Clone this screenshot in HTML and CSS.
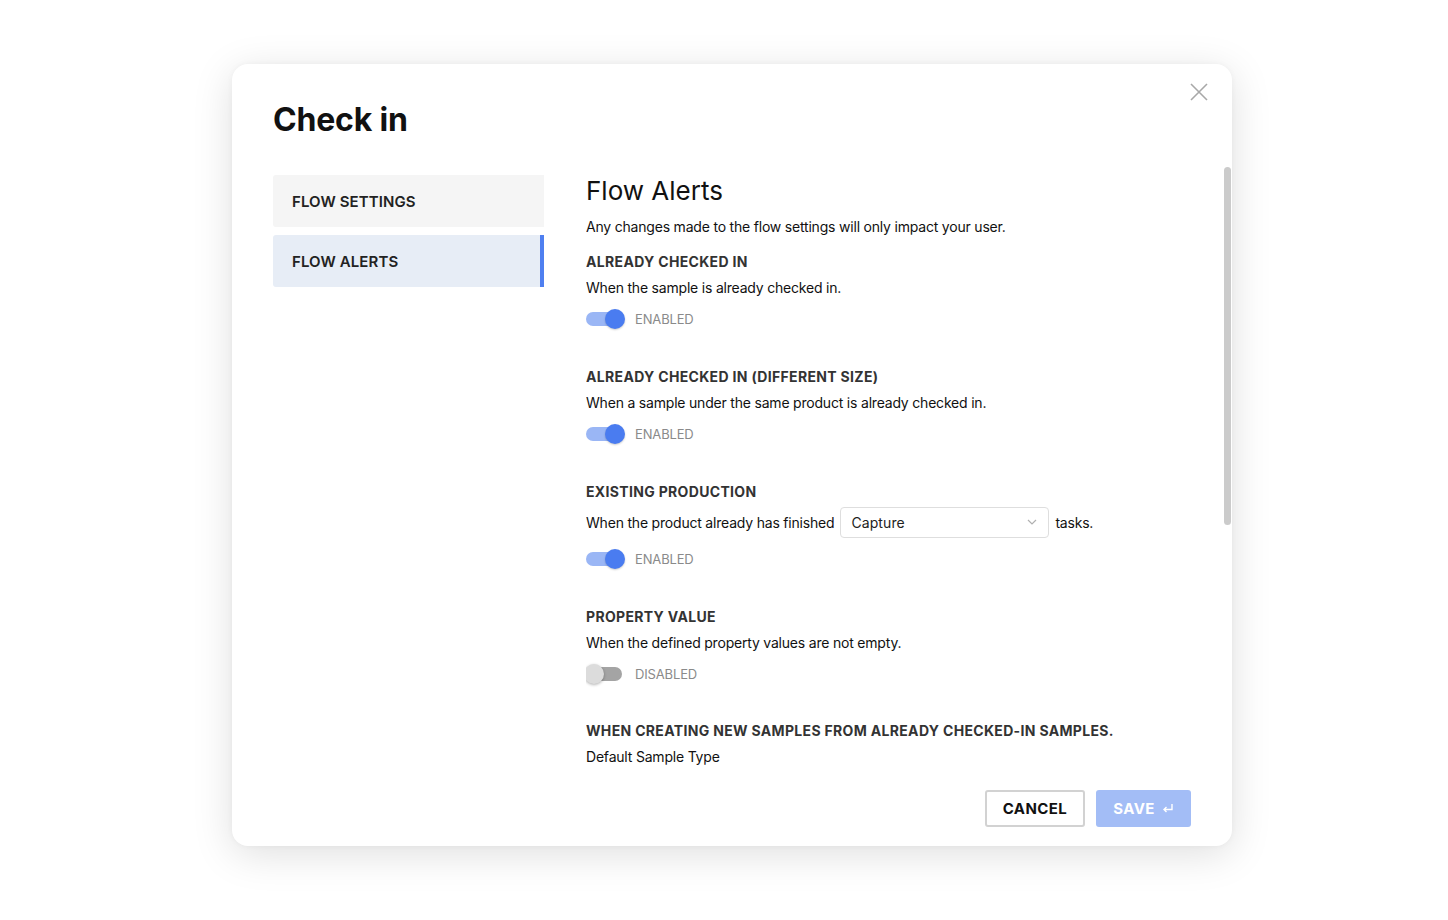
FILE: index.html
```html
<!DOCTYPE html>
<html lang="en">
<head>
<meta charset="utf-8">
<title>Check in</title>
<link rel="stylesheet" href="styles.css">
</head>
<body>
<div class="modal">
  <button class="close" aria-label="Close">
    <svg width="18" height="18" viewBox="0 0 18 18"><path d="M1 1L17 17M17 1L1 17" stroke="#a8a8a8" stroke-width="1.6" fill="none"/></svg>
  </button>
  <header class="modal-header">
    <h1 class="modal-title">Check in</h1>
  </header>
  <div class="modal-body">
    <nav class="sidebar">
      <div class="nav-item">FLOW SETTINGS</div>
      <div class="nav-item active">FLOW ALERTS</div>
    </nav>
    <div class="content">
      <h2 class="content-title">Flow Alerts</h2>
      <p class="content-desc">Any changes made to the flow settings will only impact your user.</p>

      <section class="alert">
        <h3 class="alert-title">ALREADY CHECKED IN</h3>
        <p class="alert-desc">When the sample is already checked in.</p>
        <div class="toggle-row"><span class="toggle on"><span class="knob"></span></span><span class="toggle-label">ENABLED</span></div>
      </section>

      <section class="alert">
        <h3 class="alert-title">ALREADY CHECKED IN (DIFFERENT SIZE)</h3>
        <p class="alert-desc">When a sample under the same product is already checked in.</p>
        <div class="toggle-row"><span class="toggle on"><span class="knob"></span></span><span class="toggle-label">ENABLED</span></div>
      </section>

      <section class="alert">
        <h3 class="alert-title">EXISTING PRODUCTION</h3>
        <div class="select-row">
          <span>When the product already has finished</span>
          <div class="select"><span>Capture</span>
            <svg width="10" height="6" viewBox="0 0 10 6"><path d="M1 1L5 5L9 1" stroke="#b0b0b0" stroke-width="1.2" fill="none"/></svg>
          </div>
          <span>tasks.</span>
        </div>
        <div class="toggle-row tall"><span class="toggle on"><span class="knob"></span></span><span class="toggle-label">ENABLED</span></div>
      </section>

      <section class="alert">
        <h3 class="alert-title">PROPERTY VALUE</h3>
        <p class="alert-desc">When the defined property values are not empty.</p>
        <div class="toggle-row"><span class="toggle off"><span class="knob"></span></span><span class="toggle-label off-label">DISABLED</span></div>
      </section>

      <section class="alert last">
        <h3 class="alert-title">WHEN CREATING NEW SAMPLES FROM ALREADY CHECKED-IN SAMPLES.</h3>
        <p class="alert-desc">Default Sample Type</p>
      </section>
    </div>
  </div>
  <div class="scroll-thumb"></div>
  <footer class="modal-footer">
    <button class="btn btn-cancel">CANCEL</button>
    <button class="btn btn-save">SAVE
      <svg width="12" height="11" viewBox="0 0 12 11"><path d="M10 1V6.5H2M4.5 4L2 6.5L4.5 9" stroke="#ffffff" stroke-width="1.4" fill="none"/></svg>
    </button>
  </footer>
</div>
</body>
</html>
```

FILE: styles.css
```css
* { box-sizing: border-box; }
html, body { margin: 0; padding: 0; background: #ffffff; }
body {
  font-family: Inter, "Noto Sans", "Liberation Sans", sans-serif;
  color: #111;
  padding: 64px 0 0 232px;
  height: 920px;
  overflow: hidden;
}
.modal {
  position: relative;
  width: 1000px;
  height: 782px;
  background: #fff;
  border-radius: 16px;
  box-shadow: 0 8px 40px rgba(0, 0, 0, 0.13), 0 0 6px rgba(0,0,0,0.04);
  display: flex;
  flex-direction: column;
  overflow: hidden;
}
.close {
  position: absolute;
  top: 19px;
  right: 24px;
  background: none;
  border: 0;
  padding: 0;
  width: 18px;
  height: 18px;
  cursor: pointer;
}
.scroll-thumb {
  position: absolute;
  top: 103px;
  right: 1px;
  width: 7px;
  height: 358px;
  border-radius: 4px;
  background: #cbcbcb;
}
.modal-header {
  height: 103px;
  padding: 36px 0 0 41px;
  flex: none;
}
.modal-title {
  margin: 0;
  font-size: 32px;
  line-height: 40px;
  font-weight: 700;
  letter-spacing: -0.2px;
  color: #111;
}
.modal-body {
  display: flex;
  height: 608px;
  flex: none;
}
.sidebar {
  width: 271px;
  margin-left: 41px;
  padding-top: 8px;
  display: flex;
  flex-direction: column;
  gap: 8px;
  flex: none;
}
.nav-item {
  height: 52px;
  line-height: 53px;
  padding-left: 19px;
  font-size: 15px;
  font-weight: 600;
  letter-spacing: 0.1px;
  color: #222;
  background: #f5f5f5;
  border-radius: 3px 0 0 3px;
  overflow: hidden;
}
.nav-item.active {
  background: #e7edf6;
  border-right: 4px solid #4f7ff0;
}
.content {
  flex: 1;
  margin-left: 42px;
  padding-top: 8px;
  padding-bottom: 300px;
  overflow: hidden;
}
.content-title {
  margin: 0;
  font-size: 26px;
  line-height: 32px;
  font-weight: 400;
  color: #111;
}
.content-desc {
  margin: 10px 0 0;
  font-size: 14px;
  line-height: 20px;
  letter-spacing: -0.2px;
}
.alert { margin-top: 15px; }
.alert + .alert { margin-top: 36px; }
.alert.last { margin-top: 35px; }
.alert-title {
  margin: 0;
  font-size: 14px;
  line-height: 20px;
  font-weight: 700;
  letter-spacing: 0.33px;
  color: #333;
}
.alert-desc {
  margin: 6px 0 0;
  font-size: 14px;
  line-height: 20px;
  letter-spacing: -0.2px;
  color: #111;
}
.toggle-row {
  margin-top: 9px;
  height: 24px;
  display: flex;
  align-items: center;
}
.toggle-row.tall { margin-top: 10px; }
.toggle {
  position: relative;
  width: 38px;
  height: 14px;
  border-radius: 7px;
  background: #9ab6f5;
  flex: none;
}
.toggle .knob {
  position: absolute;
  top: -3px;
  right: -1px;
  width: 20px;
  height: 20px;
  border-radius: 50%;
  background: #4a7cf0;
  box-shadow: 0 1px 2px rgba(0,0,0,0.2);
}
.toggle.off {
  width: 36px;
  background: #a4a4a4;
}
.toggle.off .knob {
  right: auto;
  left: -2px;
  background: #dcdcdc;
  box-shadow: 0 1px 3px rgba(0,0,0,0.3);
}
.toggle-label {
  margin-left: 11px;
  font-size: 13px;
  color: #8a8a8a;
  letter-spacing: -0.15px;
}
.off-label { margin-left: 13px; }
.select-row {
  margin-top: 5px;
  height: 30px;
  display: flex;
  align-items: center;
  font-size: 14px;
  letter-spacing: -0.2px;
}
.select {
  width: 209px;
  height: 31px;
  margin: 0 6px;
  border: 1px solid #dedede;
  border-radius: 4px;
  padding: 0 11px 0 10px;
  display: flex;
  align-items: center;
  justify-content: space-between;
  font-size: 14px;
  color: #222;
  letter-spacing: 0.1px;
}
.modal-footer {
  flex: none;
  display: flex;
  justify-content: flex-end;
  gap: 11px;
  padding: 15px 41px 19px 0;
}
.btn {
  height: 37px;
  font-family: Inter, "Noto Sans", "Liberation Sans", sans-serif;
  font-size: 15px;
  font-weight: 700;
  letter-spacing: 0.4px;
  border-radius: 3px;
  cursor: pointer;
  display: flex;
  align-items: center;
  justify-content: center;
  gap: 7px;
}
.btn-cancel {
  width: 100px;
  background: #fff;
  border: 2px solid #d2d2d2;
  color: #111;
}
.btn-save {
  width: 95px;
  background: #a3bdf6;
  border: 0;
  color: #fff;
}
```
